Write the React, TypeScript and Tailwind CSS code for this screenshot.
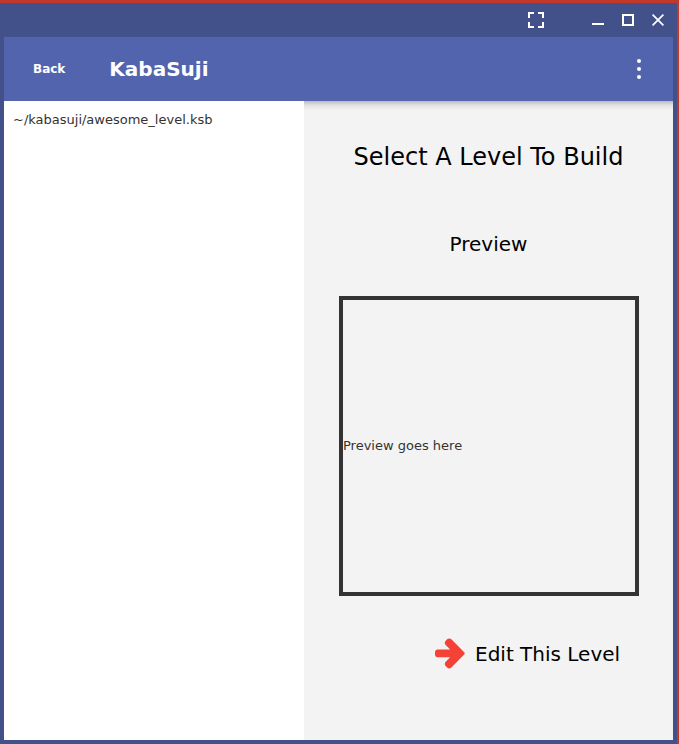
const FullscreenIcon = () => (
  <svg width="16" height="16" viewBox="0 0 16 16" fill="#fff">
    <path d="M0 0h6v2H2v4H0zM10 0h6v6h-2V2h-4zM0 10h2v4h4v2H0zM14 10h2v6h-6v-2h4z" />
  </svg>
);

const CloseIcon = () => (
  <svg width="12" height="12" viewBox="0 0 12 12" fill="none" stroke="#fff" strokeWidth="1.7">
    <path d="M.6 .6 11.4 11.4M11.4 .6 .6 11.4" />
  </svg>
);

const MoreIcon = () => (
  <svg width="4" height="20" viewBox="0 0 4 20" fill="#fff">
    <circle cx="2" cy="2" r="2" />
    <circle cx="2" cy="10" r="2" />
    <circle cx="2" cy="18" r="2" />
  </svg>
);

const ArrowIcon = () => (
  <svg width="30" height="32" viewBox="0 0 30 32" fill="#f44336">
    <path d="M29.2 14.2 16.4 1.3C15.2.1 13.3.1 12.1 1.3L10.7 2.7C9.5 3.9 9.5 5.8 10.7 7L15.1 11.5H2.5C1.1 11.5 0 12.7 0 14.2V16.6C0 18.1 1.1 19.3 2.5 19.3H15.1L10.7 23.8C9.5 25 9.5 26.9 10.7 28.1L12.1 29.5C13.3 30.7 15.2 30.7 16.4 29.5L29.2 16.6C29.9 15.9 29.9 14.9 29.2 14.2Z" />
  </svg>
);

export default function App() {
  return (
    <div className="h-[744px] w-[679px] overflow-hidden bg-[#c2392b] pt-[3px] pr-[2px] font-['DejaVu_Sans',sans-serif]">
      <div className="flex h-full flex-col bg-[#42518a] px-1 pb-1">
        <div className="flex h-[34px] shrink-0 items-center justify-end pr-[9px]">
          <FullscreenIcon />
          <div className="mt-[7px] ml-12 h-[2px] w-3 bg-white" />
          <div className="ml-[18px] h-3 w-3 border-2 border-white" />
          <div className="ml-[18px]">
            <CloseIcon />
          </div>
        </div>
        <header className="z-10 flex h-16 shrink-0 items-center bg-[#5264ae] pr-8 pl-[29px] text-white">
          <button className="text-[12px] leading-4 font-bold">Back</button>
          <h1 className="ml-11 text-[20px] leading-7 font-bold">KabaSuji</h1>
          <div className="ml-auto">
            <MoreIcon />
          </div>
        </header>
        <main className="flex min-h-0 flex-1">
          <div className="w-[300px] bg-white pt-[10px] pl-[9px] text-[13px] leading-[18px] text-[#333]">
            ~/kabasuji/awesome_level.ksb
          </div>
          <section className="flex flex-1 flex-col bg-[#f3f3f3] text-black">
            <div className="h-[9px] shrink-0 bg-linear-to-b from-[#bbbbbb] via-[#e2e2e2] via-45% to-[#f3f3f3]" />
            <h2 className="mt-[31px] text-center text-[24px] leading-8">Select A Level To Build</h2>
            <h3 className="mt-[57px] text-center text-[20px] leading-7">Preview</h3>
            <div className="mt-[38px] ml-[35px] flex h-[300px] w-[300px] shrink-0 items-center border-4 border-[#333] text-[13px] leading-[18px] text-[#333]">
              Preview goes here
            </div>
            <button className="mt-[42px] ml-[131px] flex items-center gap-[10px] text-[20px] leading-8">
              <ArrowIcon />
              <span>Edit This Level</span>
            </button>
          </section>
        </main>
      </div>
    </div>
  );
}
